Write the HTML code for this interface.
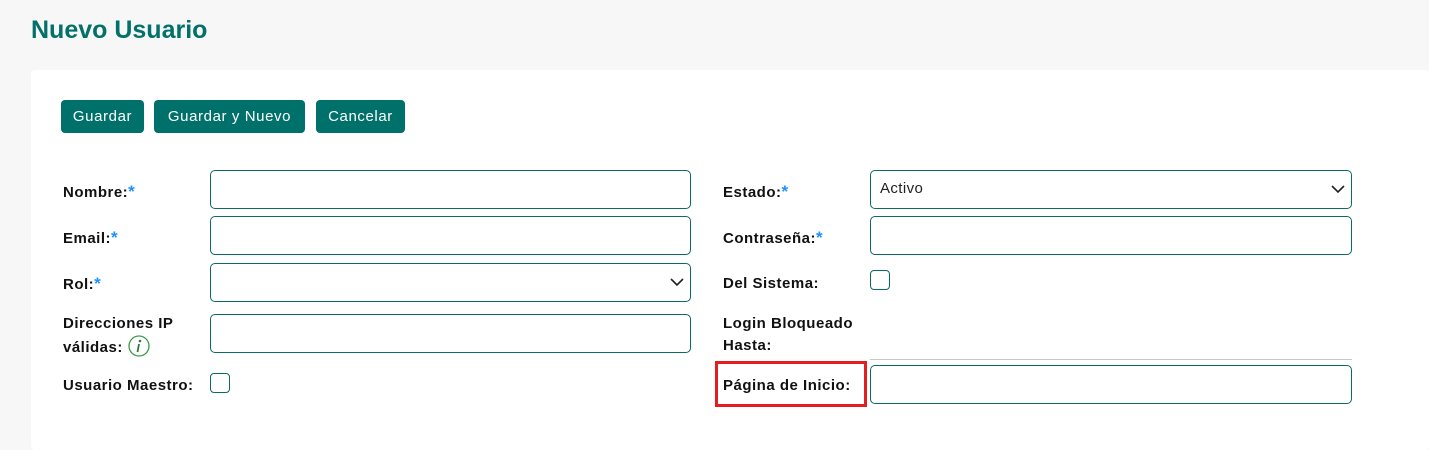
<!DOCTYPE html>
<html><head><meta charset="utf-8"><style>
*{box-sizing:border-box;margin:0;padding:0}
body{width:1429px;height:442px;background:#f7f7f7;font-family:"Liberation Sans",sans-serif;position:relative;overflow:hidden}
.t{position:absolute;left:31px;top:16px;font-size:25px;font-weight:bold;letter-spacing:0;color:#04706a;}
.card{position:absolute;left:31px;top:70px;width:1398px;height:380px;background:#fff;border-radius:4px}
.b{position:absolute;top:100px;height:33px;background:#00716a;color:#fff;border-radius:4px;font-size:15px;line-height:33px;text-align:center;letter-spacing:.6px}
.l{position:absolute;font-weight:bold;font-size:15px;color:#111;line-height:24px;letter-spacing:.5px}
.l s{text-decoration:none;color:#1e90ff;font-size:17px}
.i{position:absolute;border:1px solid #0b6b63;border-radius:5px;background:#fff}
.c{position:absolute;width:20px;height:20px;border:1px solid #0b6b63;border-radius:4px}
.ar{position:absolute;right:6px;top:13px}
</style></head><body>
<div class="t">Nuevo Usuario</div>
<div class="card"></div>
<div class="b" style="left:61px;width:83px">Guardar</div>
<div class="b" style="left:154px;width:151px">Guardar y Nuevo</div>
<div class="b" style="left:316px;width:89px">Cancelar</div>

<div class="l" style="left:63px;top:180px">Nombre:<s>*</s></div>
<div class="i" style="left:210px;top:170px;width:481px;height:39px"></div>
<div class="l" style="left:63px;top:226px">Email:<s>*</s></div>
<div class="i" style="left:210px;top:216px;width:481px;height:39px"></div>
<div class="l" style="left:63px;top:272px">Rol:<s>*</s></div>
<div class="i" style="left:210px;top:263px;width:481px;height:39px"><svg class="ar" width="14" height="10" viewBox="0 0 14 10"><path d="M1 2l6 6 6-6" fill="none" stroke="#222" stroke-width="1.6"/></svg></div>
<div class="l" style="left:63px;top:313px;line-height:22px">Direcciones IP<br>válidas: <svg width="22" height="22" viewBox="0 0 22 22" style="vertical-align:-5px"><circle cx="11" cy="11" r="10" fill="none" stroke="#3a9a4a" stroke-width="1.3"/><circle cx="12" cy="6" r="1.3" fill="#2f7a3f"/><path d="M11 9l-1.5 8" stroke="#2f7a3f" stroke-width="1.8"/></svg></div>
<div class="i" style="left:210px;top:314px;width:481px;height:39px"></div>
<div class="l" style="left:63px;top:374px">Usuario Maestro:</div>
<div class="c" style="left:210px;top:373px"></div>

<div class="l" style="left:723px;top:180px">Estado:<s>*</s></div>
<div class="i" style="left:870px;top:170px;width:482px;height:39px"><span style="position:absolute;left:9px;top:9px;font-size:15px;color:#222;letter-spacing:.4px">Activo</span><svg class="ar" width="14" height="10" viewBox="0 0 14 10"><path d="M1 2l6 6 6-6" fill="none" stroke="#222" stroke-width="1.6"/></svg></div>
<div class="l" style="left:723px;top:226px">Contraseña:<s>*</s></div>
<div class="i" style="left:870px;top:216px;width:482px;height:39px"></div>
<div class="l" style="left:723px;top:272px">Del Sistema:</div>
<div class="c" style="left:870px;top:270px"></div>
<div class="l" style="left:723px;top:313px;line-height:22px">Login Bloqueado<br>Hasta:</div>
<div style="position:absolute;left:870px;top:359px;width:482px;height:1px;background:#c8c8c8"></div>
<div style="position:absolute;left:715px;top:361px;width:152px;height:46px;border:3px solid #e41e1e"></div>
<div class="l" style="left:723px;top:374px">Página de Inicio:</div>
<div class="i" style="left:870px;top:365px;width:482px;height:39px"></div>
</body></html>
